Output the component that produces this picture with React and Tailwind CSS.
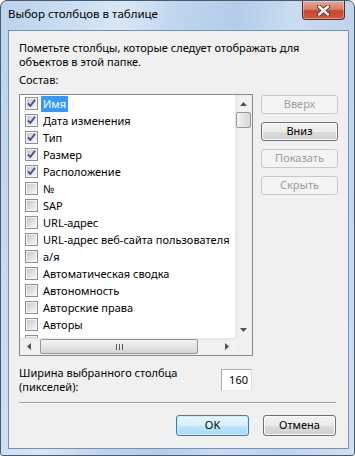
const items = [
  { label: 'Имя', checked: true, selected: true },
  { label: 'Дата изменения', checked: true },
  { label: 'Тип', checked: true },
  { label: 'Размер', checked: true },
  { label: 'Расположение', checked: true },
  { label: '№' },
  { label: 'SAP' },
  { label: 'URL-адрес' },
  { label: 'URL-адрес веб-сайта пользователя' },
  { label: 'а/я' },
  { label: 'Автоматическая сводка' },
  { label: 'Автономность' },
  { label: 'Авторские права' },
  { label: 'Авторы' },
  { label: '' },
];

const CheckBox = ({ checked }) => (
  <svg width="13" height="13" viewBox="0 0 13 13" className="shrink-0">
    <defs>
      <linearGradient id="cbfill" x1="0" y1="0" x2="1" y2="1">
        <stop offset="0" stopColor="#c4c8ce" />
        <stop offset="1" stopColor="#f6f6f6" />
      </linearGradient>
    </defs>
    <rect x="0.5" y="0.5" width="12" height="12" fill="#f4f4f4" stroke="#8e8f8f" />
    <rect x="2" y="2" width="9" height="9" fill="url(#cbfill)" />
    {checked && (
      <path d="M3 6.3 L5.3 9 L10 2.8" fill="none" stroke="#3f538a" strokeWidth="1.9" strokeLinejoin="round" />
    )}
  </svg>
);

const SideButton = ({ children, disabled }) =>
  disabled ? (
    <div className="h-[19px] w-[77px] rounded-[3px] border border-[#c6c9cc] bg-[#f4f4f4] text-[#9d9d9d] flex items-center justify-center">
      {children}
    </div>
  ) : (
    <div className="h-[19px] w-[77px] rounded-[3px] border border-[#707070] bg-[linear-gradient(to_bottom,#f2f2f2_0%,#ebebeb_50%,#dddddd_50%,#cfcfcf_100%)] shadow-[inset_0_0_0_1px_#fbfbfb] text-black flex items-center justify-center">
      {children}
    </div>
  );

const Arrow = ({ dir }) => {
  if (dir === 'left' || dir === 'right') {
    return (
      <svg width="4" height="7" viewBox="0 0 4 7">
        <path d={dir === 'left' ? 'M4 0 L0 3.5 L4 7 Z' : 'M0 0 L4 3.5 L0 7 Z'} fill="#505050" />
      </svg>
    );
  }
  return (
    <svg width="7" height="4" viewBox="0 0 7 4">
      <path d={dir === 'up' ? 'M0 4 L3.5 0 L7 4 Z' : 'M0 0 L3.5 4 L7 0 Z'} fill="#505050" />
    </svg>
  );
};

export default function App() {
  return (
    <div className="w-[355px] h-[456px] bg-white font-['Noto_Sans',sans-serif] text-[11px] text-black">
      <div className="w-[355px] h-[456px] flex flex-col rounded-t-[7px] rounded-b-[3px] border border-[#4b5b6e] bg-[linear-gradient(100deg,#bcd3ec_0%,#cbdef2_18%,#d8e7f6_28%,#bed5ee_42%,#b3cce9_55%,#c9ddf2_68%,#bdd4ed_82%,#cfe1f4_100%)] pl-[7px] pr-[5px] pb-[6px] overflow-hidden">
        {/* title bar */}
        <div className="h-[29px] flex items-start justify-between shrink-0">
          <span className="mt-[5px] leading-[15px] text-[11.5px]">Выбор столбцов в таблице</span>
          <div className="mr-[4px] w-[43px] h-[19px] rounded-b-[4px] border border-t-0 border-[#5a2a22] bg-[linear-gradient(to_bottom,#e8a795_0%,#d77e6a_45%,#c5452f_55%,#cf5a40_100%)] shadow-[inset_0_0_0_1px_rgba(255,255,255,0.35)] flex items-center justify-center">
            <svg width="13" height="11" viewBox="0 0 13 11">
              <path d="M2 1.5 L11 9.5 M11 1.5 L2 9.5" stroke="#4a2a26" strokeWidth="4.2" strokeLinecap="round" />
              <path d="M2 1.5 L11 9.5 M11 1.5 L2 9.5" stroke="#ffffff" strokeWidth="2.4" strokeLinecap="round" />
            </svg>
          </div>
        </div>

        {/* client area */}
        <div className="flex-1 border border-[#7e90a6] bg-[#f0f0f0] pl-[10px] pr-[9px] pt-[10px] flex flex-col">
          <p className="leading-[14px] text-[#000]">
            Пометьте столбцы, которые следует отображать для
            <br />
            объектов в этой папке.
          </p>
          <p className="mt-[4px] leading-[14px]">Состав:</p>

          <div className="mt-[7px] flex gap-[8px]">
            {/* list box */}
            <div className="w-[234px] h-[262px] border border-[#828790] bg-white grid grid-cols-[1fr_17px] grid-rows-[1fr_17px]">
              <div className="overflow-hidden">
                {items.map((item, i) => (
                  <div key={i} className="h-[17px] flex items-center pl-[5px] whitespace-nowrap">
                    <CheckBox checked={item.checked} />
                    {item.label && (
                      <span
                        className={
                          item.selected
                            ? 'ml-[3px] px-[2px] h-[16px] leading-[16px] bg-[#3399ff] text-white'
                            : 'ml-[3px] px-[2px] leading-[16px]'
                        }
                      >
                        {item.label}
                      </span>
                    )}
                  </div>
                ))}
              </div>

              {/* vertical scrollbar */}
              <div className="bg-[linear-gradient(to_right,#e6e6e6,#f3f3f3_30%,#f0f0f0)] flex flex-col">
                <div className="h-[17px] flex items-center justify-center">
                  <Arrow dir="up" />
                </div>
                <div className="mx-[1px] h-[16px] rounded-[2px] border border-[#979797] bg-[linear-gradient(to_right,#f5f5f5,#e2e2e2_60%,#d6d6d6)]" />
                <div className="flex-1" />
                <div className="h-[17px] flex items-center justify-center">
                  <Arrow dir="down" />
                </div>
              </div>

              {/* horizontal scrollbar */}
              <div className="bg-[linear-gradient(to_bottom,#e6e6e6,#f3f3f3_30%,#f0f0f0)] flex items-center">
                <div className="w-[17px] h-full flex items-center justify-center">
                  <Arrow dir="left" />
                </div>
                <div className="ml-[3px] w-[158px] h-[15px] rounded-[2px] border border-[#979797] bg-[linear-gradient(to_bottom,#f5f5f5,#e2e2e2_60%,#d6d6d6)] flex items-center justify-center gap-[2px]">
                  <span className="w-[1px] h-[6px] bg-[#5a5a5a]" />
                  <span className="w-[1px] h-[6px] bg-[#5a5a5a]" />
                  <span className="w-[1px] h-[6px] bg-[#5a5a5a]" />
                </div>
                <div className="flex-1" />
                <div className="w-[17px] h-full flex items-center justify-center">
                  <Arrow dir="right" />
                </div>
              </div>
              <div className="bg-[#f0f0f0]" />
            </div>

            {/* side buttons */}
            <div className="pt-[1px] flex flex-col gap-[8px]">
              <SideButton disabled>Вверх</SideButton>
              <SideButton>Вниз</SideButton>
              <SideButton disabled>Показать</SideButton>
              <SideButton disabled>Скрыть</SideButton>
            </div>
          </div>

          <div className="mt-[10px] flex items-start">
            <p className="w-[202px] leading-[14px]">
              Ширина выбранного столбца
              <br />
              (пикселей):
            </p>
            <div className="mt-[3px] w-[31px] h-[22px] border border-[#abadb3] border-b-[#e3e9ef] border-r-[#dbdfe6] bg-white flex items-center justify-end pr-[3px]">
              160
            </div>
          </div>

          <div className="mt-[8px] mr-[3px] h-[1px] bg-[#a0a0a0] shadow-[0_1px_0_#ffffff]" />

          <div className="mt-[12px] mr-[3px] flex justify-end gap-[14px]">
            <div className="w-[73px] h-[21px] rounded-[3px] border border-[#3c7fb1] bg-[linear-gradient(to_bottom,#eaf6fd_0%,#d9f0fc_50%,#bee6fd_50%,#a7d9f5_100%)] shadow-[inset_0_0_0_1px_#c9ecfd] flex items-center justify-center">
              OK
            </div>
            <div className="w-[73px] h-[21px] rounded-[3px] border border-[#707070] bg-[linear-gradient(to_bottom,#f2f2f2_0%,#ebebeb_50%,#dddddd_50%,#cfcfcf_100%)] shadow-[inset_0_0_0_1px_#fbfbfb] flex items-center justify-center">
              Отмена
            </div>
          </div>
        </div>
      </div>
    </div>
  );
}
